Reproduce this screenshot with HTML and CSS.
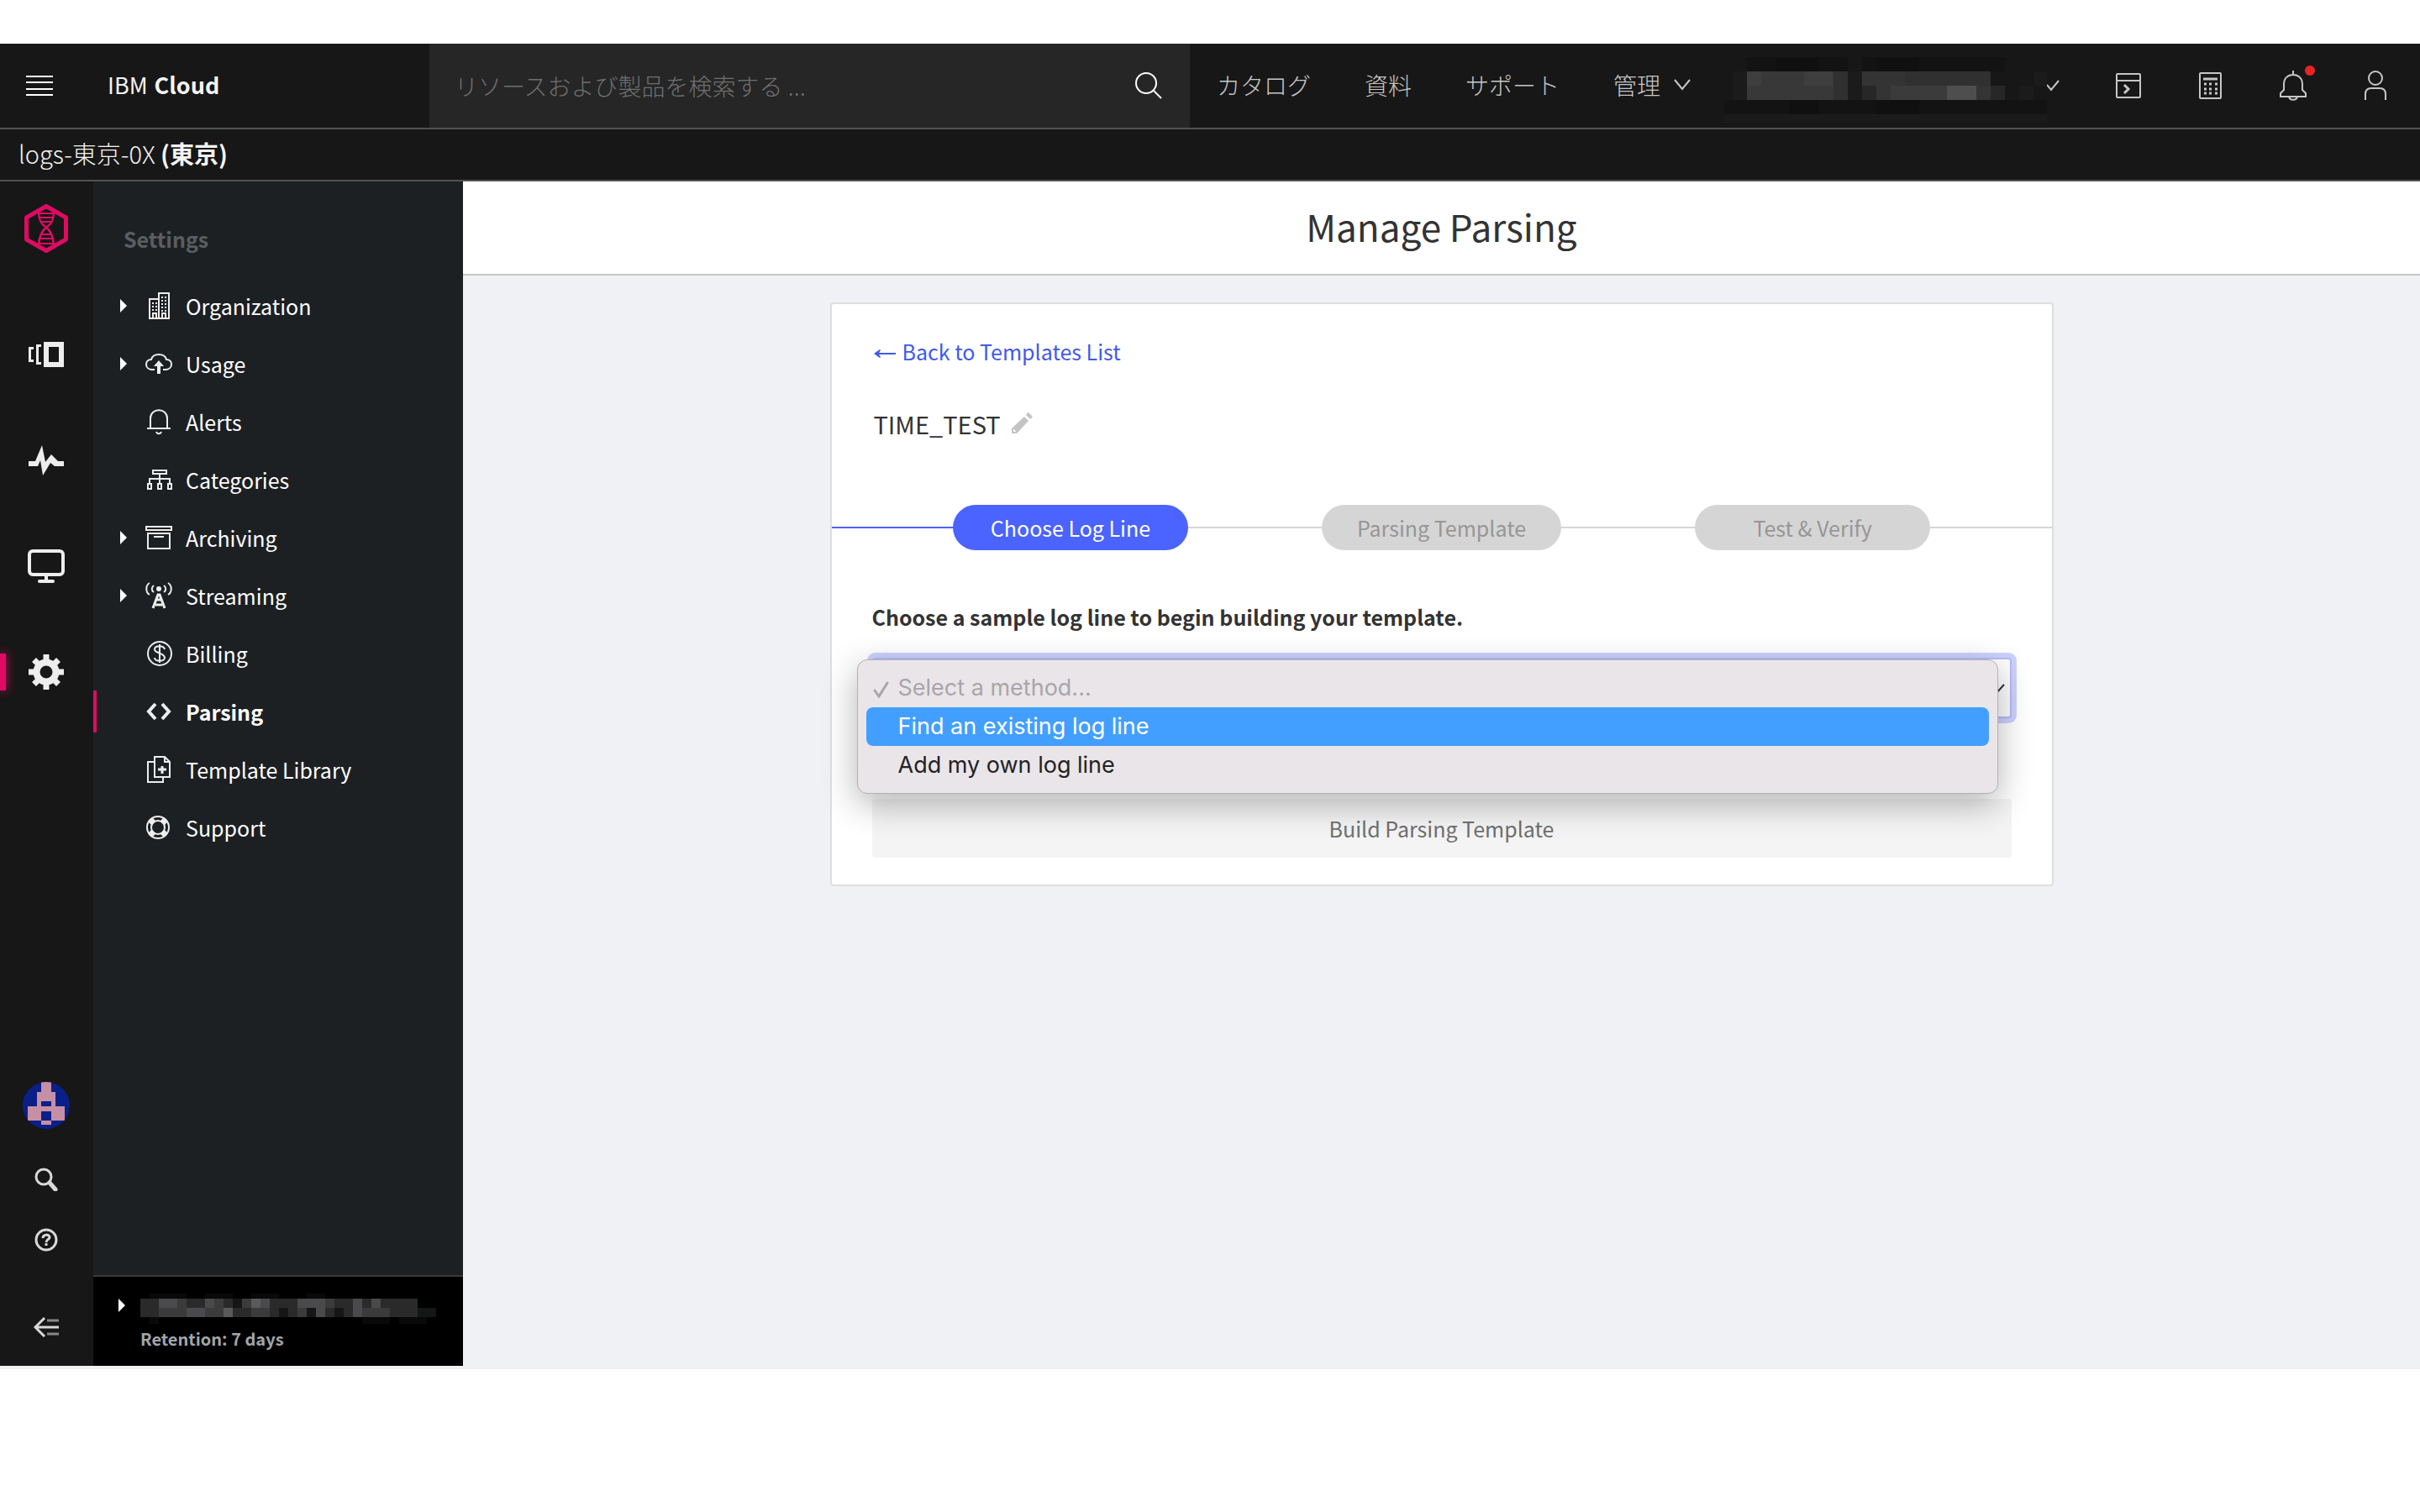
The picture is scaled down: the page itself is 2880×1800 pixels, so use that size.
FILE: index.html
```html
<!DOCTYPE html>
<html lang="ja">
<head>
  <meta charset="UTF-8">
  <title>Manage Parsing</title>
  <link rel="stylesheet" href="styles.css">
</head>
<body>
  <header class="topbar">
    <button class="menu-btn" aria-label="Menu">
      <svg width="32" height="24" viewBox="0 0 32 24"><path d="M0 1h32M0 8h32M0 16h32M0 23h32" stroke="#fff" stroke-width="2"/></svg>
    </button>
    <a class="brand" href="#">IBM <b>Cloud</b></a>
    <div class="search">
      <input type="text" aria-label="検索" placeholder="リソースおよび製品を検索する ...">
      <button aria-label="Search">
        <svg width="34" height="34" viewBox="0 0 34 34" fill="none" stroke="#fff" stroke-width="2"><circle cx="14" cy="14" r="12"/><path d="M23 23l9 9"/></svg>
      </button>
    </div>
    <nav class="links">
      <a href="#">カタログ</a>
      <a href="#">資料</a>
      <a href="#">サポート</a>
      <a href="#">管理
        <svg width="20" height="16" viewBox="0 0 20 16" fill="none" stroke="#c6c6c6" stroke-width="2"><path d="M1 2l9 11 9-11"/></svg>
      </a>
    </nav>
    <button class="account" aria-label="Account">
      <svg class="account-name" width="384" height="78" viewBox="0 0 384 78" shape-rendering="crispEdges">
        <path fill="#131313" d="M27 0h120v17H27zM164 0h170v17H164zM0 51h384v17H0z"/>
        <path fill="#101010" d="M61 0h51v17H61zM181 0h51v17h-51zM78 51h34v17H78zM181 51h51v17h-51z"/>
        <path fill="#1b1b1b" d="M0 68h384v10H0zM10 17h17v34H10zM147 17h17v34h-17zM351 34h17v17h-17zM368 17h16v17h-16z"/>
        <path fill="#383838" d="M27 17h103v34H27z"/>
        <path fill="#3e3e3e" d="M95 17h34v17H95zM27 17h17v17H27z"/>
        <path fill="#303030" d="M130 17h17v34h-17zM164 17h153v17H164z"/>
        <path fill="#272727" d="M164 34h17v17h-17zM317 34h17v17h-17z"/>
        <path fill="#343434" d="M181 34h17v17h-17zM300 34h17v17h-17zM164 17h51v17h-51z"/>
        <path fill="#3b3b3b" d="M198 34h67v17h-67z"/>
        <path fill="#4e4e4e" d="M265 34h35v17h-35z"/>
      </svg>
      <svg width="16" height="20" viewBox="0 0 16 20" fill="none" stroke="#c6c6c6" stroke-width="2"><path d="M0 9l5 6 9-11"/></svg>
    </button>
    <div class="tools">
      <button aria-label="Shell">
        <svg width="40" height="40" viewBox="0 0 40 40" fill="none" stroke="#c6c6c6" stroke-width="2"><rect x="6" y="6" width="28" height="28" rx="1"/><path d="M6 14h28"/><path d="M15 19l5 5-5 5" stroke-width="3"/></svg>
      </button>
      <button aria-label="Cost estimator">
        <svg width="40" height="40" viewBox="0 0 40 40" fill="none" stroke="#c6c6c6" stroke-width="2"><rect x="7" y="5" width="25" height="30" rx="1"/><path d="M11 12h17M12 18h3M18 18h3M25 18h3M12 24h3M18 24h3M25 24h3M12 29h3M18 29h3M25 29h3" stroke-width="3"/></svg>
      </button>
      <button aria-label="Notifications">
        <svg width="40" height="40" viewBox="0 0 40 40" fill="none" stroke="#c6c6c6" stroke-width="2"><path d="M20 2v5M9 18c0-7 5-11 11-11s11 4 11 11v7l4 4v4H5v-4l4-4z"/><path d="M15 33c1 5 9 5 10 0"/></svg>
        <span class="dot"></span>
      </button>
      <button aria-label="User">
        <svg width="40" height="40" viewBox="0 0 40 40" fill="none" stroke="#c6c6c6" stroke-width="2"><ellipse cx="20" cy="11" rx="8" ry="8"/><path d="M8 37v-7c0-5 3-7 7-7h10c4 0 7 2 7 7v7"/></svg>
      </button>
    </div>
  </header>
  <div class="crumb">logs-東京-0X&nbsp;<b>(東京)</b></div>

  <div class="app">
    <nav class="rail">
      <a class="logo" href="#" aria-label="Home">
        <svg width="52" height="58" viewBox="0 0 52 58" fill="none" stroke="#df0b61"><path d="M26 2.500L49.500 16v26L26 55.500 2.500 42V16z" stroke-width="5" stroke-linejoin="round"/><path d="M17 9c0 9 2 14 8 18s9 10 10 21M35 9c0 9-2 14-8 18s-9 10-10 21" stroke-width="2.500"/><path d="M17 11h18M18 16h16M20 21h12M20 36h12M18 41h16M17 47h18" stroke-width="2"/></svg>
      </a>
      <a class="rail-item" href="#" aria-label="Views">
        <svg width="42" height="30" viewBox="0 0 42 30" fill="none" stroke="#ededed"><rect x="21" y="3" width="18" height="24" stroke-width="6"/><path d="M15 4.500h-4.500v21H15M6 7.500H1.500v15H6" stroke-width="3"/></svg>
      </a>
      <a class="rail-item" href="#" aria-label="Activity">
        <svg width="42" height="36" viewBox="0 0 42 36" fill="#ededed"><path d="M0 19h8l8-19 4 20 7-9 8 8h7v6H31l-5-4-9 15-3-18-3 7H0z"/></svg>
      </a>
      <a class="rail-item" href="#" aria-label="Screens">
        <svg width="44" height="40" viewBox="0 0 44 40" fill="none" stroke="#ededed" stroke-width="4"><rect x="2" y="2" width="40" height="28" rx="4"/><path d="M22 30v7"/><path d="M14 38h16" stroke-linecap="round"/></svg>
      </a>
      <a class="rail-item active" href="#" aria-label="Settings">
        <svg width="42" height="42" viewBox="0 0 42 42" fill="none" stroke="#ededed"><circle cx="21" cy="21" r="11.500" stroke-width="8"/><path d="M21 0v8M21 34v8M0 21h8M34 21h8M6.500 6.500l5 5M30.500 30.500l5 5M6.500 35.500l5-5M30.500 11.500l5-5" stroke-width="7"/></svg>
      </a>
      <div class="rail-bottom">
        <a class="avatar" href="#" aria-label="Profile">
          <svg width="56" height="56" viewBox="0 0 56 56"><clipPath id="round"><circle cx="28" cy="28" r="28"/></clipPath><g clip-path="url(#round)"><path fill="#0b1f88" d="M0 0h56v56H0z"/><path fill="#c58fa6" d="M22 0h12v12h5v17h11v17H34v5H22v-5H6V29h11V12h5z"/><path fill="#0b1f88" d="M22 23h12v6H22zM22 35h12v11H22z"/></g></svg>
        </a>
        <button aria-label="Search logs">
          <svg width="28" height="28" viewBox="0 0 28 28" fill="none" stroke="#d8d8d8" stroke-width="3"><circle cx="11" cy="11" r="9"/><path d="M18 18l7 8" stroke-width="5" stroke-linecap="round"/></svg>
        </button>
        <button aria-label="Help">
          <svg width="28" height="28" viewBox="0 0 28 28" fill="none" stroke="#d8d8d8" stroke-width="3"><circle cx="14" cy="14" r="12"/><path d="M10 12c0-5 8-5 8-1 0 3-4 2-4 6M14 18v3"/></svg>
        </button>
        <button class="collapse" aria-label="Collapse">
          <svg width="30" height="24" viewBox="0 0 30 24" fill="none" stroke="#d8d8d8" stroke-width="3"><path d="M13 1L2 12l11 11M2 12h28"/><path d="M16 4h14M16 20h14" stroke="#888"/></svg>
        </button>
      </div>
    </nav>

    <aside class="sidebar">
      <h2>Settings</h2>
      <ul>
        <li><a class="more" href="#">
          <svg viewBox="0 0 32 32"><path d="M5 31V8h11V1h12v30zM16 8v23"/><path d="M8 13h2M12 13h2M8 17h2M12 17h2M8 21h2M12 21h2M19 6h2M23 6h2M19 10h2M23 10h2M19 14h2M23 14h2M19 18h2M23 18h2M19 22h2M23 22h2M9 31v-6h4v6M20 31v-6h4v6"/></svg>
          Organization</a></li>
        <li><a class="more" href="#">
          <svg viewBox="0 0 32 32"><path d="M11 23H7C-1 22-1 11 7 11c2-8 16-8 18 0 8 0 8 11 0 12h-4"/><path class="solid" d="M16 12l6 7h-4v9h-4v-9h-4z"/></svg>
          Usage</a></li>
        <li><a href="#">
          <svg viewBox="0 0 32 32"><path d="M6 24V12C6 -1 26 -1 26 12v12M2 24h28M13 28c1 3 5 3 6 0"/></svg>
          Alerts</a></li>
        <li><a href="#">
          <svg viewBox="0 0 32 32"><path d="M9 5h16v4H9zM17 9v12M5 21v-6h24v6M3 21h4v6H3zM15 21h4v6h-4zM27 21h4v6h-4z"/></svg>
          Categories</a></li>
        <li><a class="more" href="#">
          <svg viewBox="0 0 32 32"><path d="M1 3h30v4H1zM3 11h26v18H3zM10 15h12"/></svg>
          Archiving</a></li>
        <li><a class="more" href="#">
          <svg viewBox="0 0 32 32"><circle class="solid" cx="16" cy="8" r="3"/><path d="M5 1C0 4 0 12 5 15M27 1c5 3 5 11 0 14M10 4c-3 2-3 6 0 8M22 4c3 2 3 6 0 8"/><path stroke-width="3" d="M9 31l6-16h2l6 16M12 27h8M13 21h6"/></svg>
          Streaming</a></li>
        <li><a href="#">
          <svg viewBox="0 0 32 32"><circle cx="17" cy="16" r="14"/><path d="M23 11c-1-5-12-5-12 0s12 4 12 10c0 5-12 5-12 0M17 5v22"/></svg>
          Billing</a></li>
        <li><a class="active" href="#">
          <svg viewBox="0 0 32 32"><path stroke-width="4" d="M12 7l-8 9 8 9M20 7l8 9-8 9"/></svg>
          Parsing</a></li>
        <li><a href="#">
          <svg viewBox="0 0 32 32"><path d="M11 1h12l6 6v18H11zM23 1v6h6M11 7H3v24h18v-6"/><path stroke-width="3" d="M20 12v9M15 16h10"/></svg>
          Template Library</a></li>
        <li><a href="#">
          <svg viewBox="0 0 32 32"><circle cx="15" cy="16" r="13"/><circle cx="15" cy="16" r="8"/><path stroke-width="7" d="M6 7l4 4M20 21l4 4M6 25l4-4M20 11l4-4"/></svg>
          Support</a></li>
      </ul>
      <div class="org">
        <svg class="org-name" width="352" height="36" viewBox="0 0 352 36" shape-rendering="crispEdges">
          <path fill="#090909" d="M11 0h44v6H11zM77 0h33v6H77zM132 0h33v6h-33zM198 0h22v6h-22zM11 28h11v8H11zM264 28h33v8h-33zM308 28h33v8h-33z"/>
          <path fill="#2a2a2b" d="M0 6h330v11H0zM0 17h330v11H0z"/>
          <path fill="#3b3b3c" d="M44 6h11v11H44zM88 6h11v11H88zM121 6h11v11h-11zM220 6h11v11h-11zM22 17h33v11H22zM77 17h22v11H77zM132 17h22v11h-22zM187 17h11v11h-11zM264 17h33v11h-33z"/>
          <path fill="#4a4a4c" d="M22 6h22v11H22zM77 6h11v11H77zM143 6h11v11h-11zM187 6h33v11h-33zM253 6h11v11h-11zM275 6h11v11h-11zM55 17h22v11H55zM209 17h11v11h-11zM253 17h11v11h-11z"/>
          <path fill="#5a5a5d" d="M132 6h11v11h-11zM99 17h11v11H99z"/>
          <path fill="#151616" d="M110 6h11v11h-11zM165 17h11v11h-11zM198 17h11v11h-11zM231 17h11v11h-11zM330 17h22v11h-22z"/>
        </svg>
        <p>Retention: 7 days</p>
      </div>
    </aside>

    <main>
      <h1>Manage Parsing</h1>
      <section class="card">
        <a class="back" href="#"><svg width="26" height="18" viewBox="0 0 26 18"><path d="M0 12l7-5 1 1-2 3h20v2H6l2 3-1 1z" fill="#4159ea"/></svg>Back to Templates List</a>
        <div class="name">
          TIME_TEST
          <button aria-label="Rename">
            <svg width="26" height="26" viewBox="0 0 26 26"><path fill="#c4c4c4" d="M19 1l2-1 5 5-3 3-5-5zM16 5l5 5L7 25H1v-6zM3 19v4h3l-1-2H4z" fill-rule="evenodd"/></svg>
          </button>
        </div>
        <div class="steps">
          <span class="line done"></span>
          <button class="step current">Choose Log Line</button>
          <span class="line inner"></span>
          <button class="step" disabled>Parsing Template</button>
          <span class="line inner"></span>
          <button class="step" disabled>Test &amp; Verify</button>
          <span class="line"></span>
        </div>
        <div class="form">
          <label for="method">Choose a sample log line to begin building your template.</label>
          <div class="select">
            <select id="method">
              <option>Select a method...</option>
              <option>Find an existing log line</option>
              <option>Add my own log line</option>
            </select>
            <svg class="caret" width="20" height="12" viewBox="0 0 20 12" fill="none" stroke="#333" stroke-width="2"><path d="M1 1l9 10 9-10"/></svg>
            <ul class="options" role="listbox">
              <li class="placeholder" role="option">
                <svg width="20" height="20" viewBox="0 0 20 20" fill="none" stroke="#a9a5a8" stroke-width="3" stroke-linecap="round"><path d="M2 11l5 7L17 2"/></svg>
                Select a method...</li>
              <li class="hover" role="option">Find an existing log line</li>
              <li role="option">Add my own log line</li>
            </ul>
          </div>
          <button class="build" disabled>Build Parsing Template</button>
        </div>
      </section>
    </main>
  </div>
</body>
</html>
```
FILE: styles.css
```css
:root {
  --pink: #df0b61;
  --blue: #4b63ff;
  --dark: #171717;
}

* {
  box-sizing: border-box;
}

body {
  margin: 0;
  padding: 52px 0 170px;
  height: 100vh;
  display: flex;
  flex-direction: column;
  background: #fff;
  color: #333;
  font-family: "Noto Sans CJK JP", sans-serif;
  font-size: 27px;
}

a {
  color: inherit;
  text-decoration: none;
}

button {
  display: flex;
  align-items: center;
  justify-content: center;
  padding: 0;
  border: none;
  background: none;
  color: inherit;
  font: inherit;
  cursor: pointer;
}

ul {
  list-style: none;
  margin: 0;
  padding: 0;
}

/* top bar */
.topbar {
  display: flex;
  flex: none;
  height: 102px;
  background: var(--dark);
  border-bottom: 2px solid #525252;
  color: #c6c6c6;
  font-size: 28px;
  font-weight: 300;
}

.menu-btn {
  width: 94px;
}

.brand {
  display: flex;
  align-items: center;
  gap: 8px;
  width: 417px;
  padding: 0 0 4px 34px;
  color: #f4f4f4;
  font-size: 27px;
  font-weight: 400;
}

.brand b {
  font-weight: 700;
}

.search {
  display: flex;
  width: 905px;
  padding-right: 32px;
  background: #262626;
}

.search input {
  flex: 1;
  padding: 0 0 0 30px;
  border: none;
  outline: none;
  background: none;
  color: #fff;
  font: inherit;
}

.search input::placeholder {
  color: #6f6f6f;
}

.links {
  display: flex;
}

.links a {
  display: flex;
  align-items: center;
  gap: 16px;
  padding: 0 32px 2px;
}

.account {
  margin-left: 8px;
}

.account-name {
  margin-top: 10px;
}

.tools {
  display: flex;
  margin-left: auto;
  padding-right: 4px;
}

.tools button {
  position: relative;
  width: 98px;
}

.dot {
  position: absolute;
  top: 26px;
  right: 23px;
  width: 12px;
  height: 12px;
  border-radius: 50%;
  background: #ea2424;
}

.crumb {
  display: flex;
  flex: none;
  align-items: center;
  height: 62px;
  padding: 0 0 4px 22px;
  background: var(--dark);
  border-bottom: 2px solid #525252;
  color: #f4f4f4;
  font-size: 29px;
  font-weight: 300;
}

.crumb b {
  font-weight: 700;
}

/* layout */
.app {
  display: flex;
  flex: 1;
  background: #f0f1f4;
}

.rail {
  display: flex;
  flex-direction: column;
  width: 111px;
  margin-bottom: 4px;
  padding: 0 2px 10px 0;
  background: var(--dark);
}

.logo {
  display: flex;
  justify-content: center;
  height: 143px;
  padding-top: 27px;
}

.rail-item {
  position: relative;
  display: flex;
  align-items: center;
  justify-content: center;
  height: 126px;
}

.rail-item.active::before {
  content: "";
  position: absolute;
  left: 0;
  width: 7px;
  height: 44px;
  background: var(--pink);
  box-shadow: 0 0 12px var(--pink);
}

.rail-bottom {
  display: flex;
  flex-direction: column;
  margin-top: auto;
}

.rail-bottom button {
  height: 72px;
}

.rail-bottom .collapse {
  margin-top: 32px;
}

.avatar {
  height: 56px;
  margin-bottom: 24px;
  text-align: center;
}

.sidebar {
  display: flex;
  flex-direction: column;
  width: 440px;
  margin-bottom: 4px;
  background: #1d2023;
  color: #fff;
}

.sidebar h2 {
  margin: 0;
  padding: 48px 0 0 36px;
  color: #5a5e61;
  font-size: 25px;
  line-height: 40px;
}

.sidebar ul {
  margin-top: 25px;
}

.sidebar li a {
  position: relative;
  display: flex;
  align-items: center;
  gap: 16px;
  height: 69px;
  padding-left: 62px;
  font-size: 25px;
}

.sidebar li svg {
  width: 32px;
  height: 32px;
  fill: none;
  stroke: #ededed;
  stroke-width: 2;
}

.sidebar li .solid {
  fill: #ededed;
  stroke: none;
}

.sidebar .more::before,
.org::before {
  content: "";
  position: absolute;
  left: 32px;
  border-left: 8px solid #fff;
  border-top: 8px solid transparent;
  border-bottom: 8px solid transparent;
}

.sidebar .active {
  font-weight: 700;
}

.sidebar .active::after {
  content: "";
  position: absolute;
  left: 0;
  width: 4px;
  height: 50px;
  background: var(--pink);
}

.org {
  position: relative;
  margin-top: auto;
  height: 108px;
  padding: 20px 0 0 56px;
  background: #000;
  border-top: 2px solid #3a3a3a;
}

.org::before {
  left: 30px;
  top: 26px;
}

.org-name {
  display: block;
}

.org p {
  margin: 4px 0 0;
  color: #a2a6ab;
  font-size: 20px;
  font-weight: 700;
  line-height: 28px;
}

/* content */
main {
  flex: 1;
}

main h1 {
  margin: 0;
  padding-bottom: 4px;
  background: #fff;
  border-bottom: 2px solid #c6c6c6;
  font-size: 44px;
  font-weight: 400;
  line-height: 106px;
  text-align: center;
}

.card {
  max-width: 1456px;
  margin: 32px auto 0;
  padding: 40px 0 32px;
  background: #fff;
  border: 2px solid #dedede;
  border-radius: 4px;
}

.back {
  display: flex;
  align-items: center;
  gap: 8px;
  margin-left: 50px;
  color: #4159ea;
  font-size: 25px;
  line-height: 32px;
}

.name {
  display: flex;
  align-items: center;
  gap: 12px;
  margin: 50px 0 0 50px;
  font-size: 29px;
  line-height: 40px;
}

.steps {
  display: flex;
  align-items: center;
  margin-top: 77px;
}

.line {
  flex: 10;
  height: 2px;
  background: #d5d5d5;
}

.line.inner {
  flex: 11;
}

.line.done {
  background: var(--blue);
}

.step {
  min-width: 280px;
  height: 54px;
  padding: 0 42px;
  border-radius: 27px;
  background: #d5d5d5;
  color: #969696;
  font-size: 25px;
}

.step.current {
  background: var(--blue);
  color: #fff;
}

.form {
  padding: 0 48px;
}

.form label {
  display: block;
  margin-top: 63px;
  font-size: 25px;
  font-weight: 700;
  line-height: 32px;
}

.select {
  position: relative;
  margin-top: 33px;
}

.select select {
  display: block;
  width: 100%;
  height: 72px;
  padding: 0 48px 0 24px;
  appearance: none;
  background: #fff;
  border: 2px solid #b4bcf8;
  border-radius: 4px;
  box-shadow: 0 0 0 6px #ccd2ff;
  color: #333;
  font: inherit;
}

.caret {
  position: absolute;
  top: 31px;
  right: 8px;
}

/* open list, sits over the select */
.options {
  position: absolute;
  top: 2px;
  left: -18px;
  right: 16px;
  padding: 10px;
  background: #e9e5e9;
  border: 1px solid #b2b2b4;
  border-radius: 12px;
  box-shadow: 0 12px 40px rgba(0, 0, 0, 0.3);
  color: #222;
  font-family: Inter, sans-serif;
}

.options li {
  position: relative;
  padding-left: 38px;
  border-radius: 8px;
  line-height: 46px;
}

.options .hover {
  background: #439fff;
  color: #fff;
}

.options .placeholder {
  color: #a9a5a8;
}

.options svg {
  position: absolute;
  top: 15px;
  left: 8px;
}

.build {
  width: 100%;
  height: 70px;
  margin-top: 96px;
  border-radius: 4px;
  background: #f4f4f4;
  color: #6f6f6f;
  font-size: 25px;
}
```
